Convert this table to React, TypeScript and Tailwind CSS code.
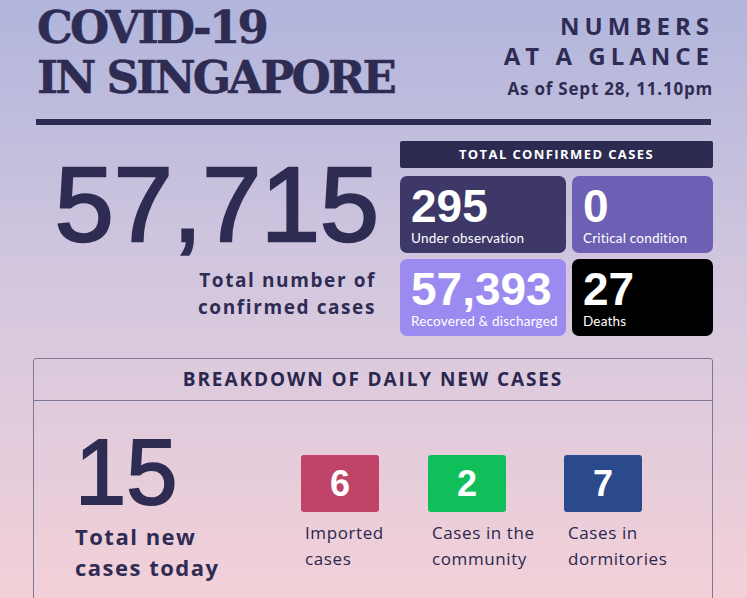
import React from "react";

const ink = "text-[#2f2c54]";

const cards = [
  { value: "295", label: "Under observation", bg: "bg-[#3e3868]" },
  { value: "0", label: "Critical condition", bg: "bg-[#6c5fb4]" },
  { value: "57,393", label: "Recovered & discharged", bg: "bg-[#9b8bf0]" },
  { value: "27", label: "Deaths", bg: "bg-black" },
];

const breakdown = [
  { value: "6", label: ["Imported", "cases"], bg: "bg-[#c04468]", w: "w-[127px]" },
  { value: "2", label: ["Cases in the", "community"], bg: "bg-[#10bf5a]", w: "w-[136px]" },
  { value: "7", label: ["Cases in", "dormitories"], bg: "bg-[#2b4a8c]", w: "w-[120px]" },
];

const App = () => {
  return (
    <div className="w-[747px] h-[598px] overflow-hidden bg-gradient-to-b from-[#b1b5dc] via-[#d5c8de] to-[#f3d0d8] font-['Open_Sans',sans-serif]">
      {/* header */}
      <div className="flex justify-between pl-[37px] pr-[34px] pt-[3px]">
        <h1 className={`font-['DejaVu_Serif',serif] font-bold text-[45px] leading-[50px] ${ink} tracking-[-2.8px] [-webkit-text-stroke:0.5px_#2f2c54]`}>
          COVID-19
          <br />
          IN SINGAPORE
        </h1>
        <div className={`text-right ${ink} pt-[8px]`}>
          <p className="font-bold text-[24px] leading-[30px] tracking-[5px] mr-[-1px]">NUMBERS</p>
          <p className="font-bold text-[24px] leading-[30px] tracking-[5px] mr-[-1px]">AT A GLANCE</p>
          <p className="font-bold text-[17px] leading-[20px] tracking-[0.8px] mt-[8px]">As of Sept 28, 11.10pm</p>
        </div>
      </div>
      <div className="mx-[36px] mt-[16px] h-[6px] bg-[#2f2c54]" />

      {/* totals */}
      <div className="flex mt-[15px] mx-[34px] ml-[36px]">
        <div className={`flex-1 flex flex-col items-end pr-[24px] ${ink}`}>
          <p className="font-['Liberation_Sans',sans-serif] text-[106px] leading-[112px] mt-[8px] mr-[-3px] [-webkit-text-stroke:2.5px_#2f2c54]">57,715</p>
          <p className="font-bold text-[19px] leading-[27px] tracking-[1.6px] text-right mt-[7px]">
            Total number of
            <br />
            confirmed cases
          </p>
        </div>
        <div className="w-[313px] pt-[1px]">
          <div className="h-[27px] bg-[#2e2b52] rounded-[2px] flex items-center justify-center text-white font-bold text-[13px] tracking-[1.4px]">
            TOTAL CONFIRMED CASES
          </div>
          <div className="grid grid-cols-[166px_141px] gap-[6px] mt-[8px]">
            {cards.map((c) => (
              <div key={c.label} className={`${c.bg} h-[77px] rounded-[7px] px-[11px] pt-[10px] text-white`}>
                <p className="font-['Liberation_Sans',sans-serif] font-bold text-[46px] leading-[40px]">{c.value}</p>
                <p className="font-['Lato',sans-serif] text-[13.5px] leading-[16px] tracking-[0.2px] mt-[4px] whitespace-nowrap">{c.label}</p>
              </div>
            ))}
          </div>
        </div>
      </div>

      {/* breakdown */}
      <div className="mx-[33px] mr-[34px] mt-[22px] border border-[#7d7896] rounded-t-[3px] h-[300px]">
        <div className="h-[42px] border-b border-[#7d7896] flex items-center justify-center">
          <p className="font-bold text-[19px] tracking-[1.9px] text-[#2a2750]">
            BREAKDOWN OF DAILY NEW CASES
          </p>
        </div>
        <div className="flex pl-[41px] pt-[24px]">
          <div className={`w-[226px] ${ink}`}>
            <p className="font-['Liberation_Sans',sans-serif] text-[92px] leading-[90px] mt-[2px] [-webkit-text-stroke:2px_#2f2c54]">15</p>
            <p className="font-bold text-[22px] leading-[31px] tracking-[1.5px] mt-[4px]">
              Total new
              <br />
              cases today
            </p>
          </div>
          <div className="flex pt-[30px]">
            {breakdown.map((b) => (
              <div key={b.value} className={b.w}>
                <div className={`${b.bg} w-[78px] h-[57px] rounded-[3px] flex items-center justify-center text-white font-['Liberation_Sans',sans-serif] font-bold text-[36px]`}>
                  {b.value}
                </div>
                <p className="text-[17px] leading-[26px] tracking-[0.6px] text-[#2a2750] mt-[8px] ml-[4px]">
                  {b.label[0]}
                  <br />
                  {b.label[1]}
                </p>
              </div>
            ))}
          </div>
        </div>
      </div>
    </div>
  );
};

export default App;
